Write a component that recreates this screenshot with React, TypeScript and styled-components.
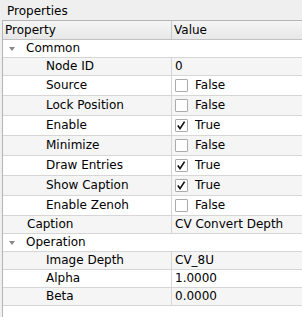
import React from "react";
import styled, { createGlobalStyle } from "styled-components";

type Item = {
  label: string;
  level: number;
  group?: boolean;
  value?: string;
  check?: boolean;
};

const items: Item[] = [
  { label: "Common", level: 0, group: true },
  { label: "Node ID", level: 1, value: "0" },
  { label: "Source", level: 1, check: false },
  { label: "Lock Position", level: 1, check: false },
  { label: "Enable", level: 1, check: true },
  { label: "Minimize", level: 1, check: false },
  { label: "Draw Entries", level: 1, check: true },
  { label: "Show Caption", level: 1, check: true },
  { label: "Enable Zenoh", level: 1, check: false },
  { label: "Caption", level: 0, value: "CV Convert Depth" },
  { label: "Operation", level: 0, group: true },
  { label: "Image Depth", level: 1, value: "CV_8U" },
  { label: "Alpha", level: 1, value: "1.0000" },
  { label: "Beta", level: 1, value: "0.0000" },
];

const CheckBox: React.FC<{ checked: boolean }> = ({ checked }) => (
  <Box>
    {checked && (
      <svg width="11" height="11" viewBox="0 0 11 11">
        <polyline points="1.8,5.6 4,8.6 8.6,1.6" fill="none" stroke="#111" strokeWidth="1.7" />
      </svg>
    )}
  </Box>
);

const App: React.FC = () => {
  return (
    <Panel>
      <GlobalStyle />
      <TitleBar>Properties</TitleBar>
      <Tree>
        <Header>
          <HeaderCell $first>Property</HeaderCell>
          <HeaderCell>Value</HeaderCell>
        </Header>
        {items.map((it, i) => {
          const alt = i % 2 === 1;
          if (it.group) {
            return (
              <GroupRow key={it.label} $alt={alt}>
                <Arrow />
                {it.label}
              </GroupRow>
            );
          }
          const isCheck = it.check !== undefined;
          return (
            <Row key={it.label} $alt={alt} $tall={isCheck}>
              <NameCell $level={it.level}>{it.label}</NameCell>
              <ValueCell>
                {isCheck && <CheckBox checked={!!it.check} />}
                {isCheck ? (it.check ? "True" : "False") : it.value}
              </ValueCell>
            </Row>
          );
        })}
      </Tree>
    </Panel>
  );
};

const GlobalStyle = createGlobalStyle`
  body {
    margin: 0;
    background: #efefef;
    font-family: "DejaVu Sans", "Liberation Sans", sans-serif;
    font-size: 12px;
    color: #000;
  }
`;

const Panel = styled.div`
  width: 302px;
  height: 317px;
  display: flex;
  flex-direction: column;
  background: #efefef;
  overflow: hidden;
`;

const TitleBar = styled.div`
  height: 20px;
  box-sizing: border-box;
  padding: 2px 0 0 7px;
  line-height: 18px;
`;

const Tree = styled.div`
  flex: 1;
  margin-left: 2px;
  border-left: 1px solid #b5b5b5;
  border-top: 1px solid #b5b5b5;
  background: #fff;
`;

const Header = styled.div`
  display: grid;
  grid-template-columns: 169px 1fr;
  height: 19px;
  box-sizing: border-box;
  border-bottom: 1px solid #c2c2c2;
  background: linear-gradient(#f5f5f5, #e8e8e8);
  line-height: 18px;
`;

const HeaderCell = styled.div<{ $first?: boolean }>`
  padding-left: ${(p) => (p.$first ? "2px" : "2px")};
  border-right: ${(p) => (p.$first ? "1px solid #c8c8c8" : "none")};
`;

const GroupRow = styled.div<{ $alt: boolean }>`
  display: flex;
  align-items: center;
  height: 18px;
  box-sizing: border-box;
  border-bottom: 1px solid #d6d6d6;
  background: ${(p) => (p.$alt ? "#f5f5f5" : "#fff")};
  padding-left: 6px;
  line-height: 17px;
`;

const Arrow = styled.span`
  width: 0;
  height: 0;
  border-left: 3.5px solid transparent;
  border-right: 3.5px solid transparent;
  border-top: 4px solid #888;
  margin-right: 11px;
`;

const Row = styled.div<{ $alt: boolean; $tall: boolean }>`
  display: grid;
  grid-template-columns: 169px 1fr;
  height: ${(p) => (p.$tall ? "20px" : "18px")};
  box-sizing: border-box;
  border-bottom: 1px solid #d6d6d6;
  background: ${(p) => (p.$alt ? "#f5f5f5" : "#fff")};
  line-height: ${(p) => (p.$tall ? "19px" : "17px")};
`;

const NameCell = styled.div<{ $level: number }>`
  padding-left: ${(p) => 24 + p.$level * 19}px;
  border-right: 1px solid #d6d6d6;
  white-space: nowrap;
`;

const ValueCell = styled.div`
  display: flex;
  align-items: center;
  padding-left: 3px;
  white-space: nowrap;
`;

const Box = styled.span`
  width: 13px;
  height: 13px;
  box-sizing: border-box;
  border: 1px solid #ababab;
  border-radius: 1px;
  background: #fff;
  margin-right: 7px;
  display: flex;
  align-items: center;
  justify-content: center;
`;

export default App;
